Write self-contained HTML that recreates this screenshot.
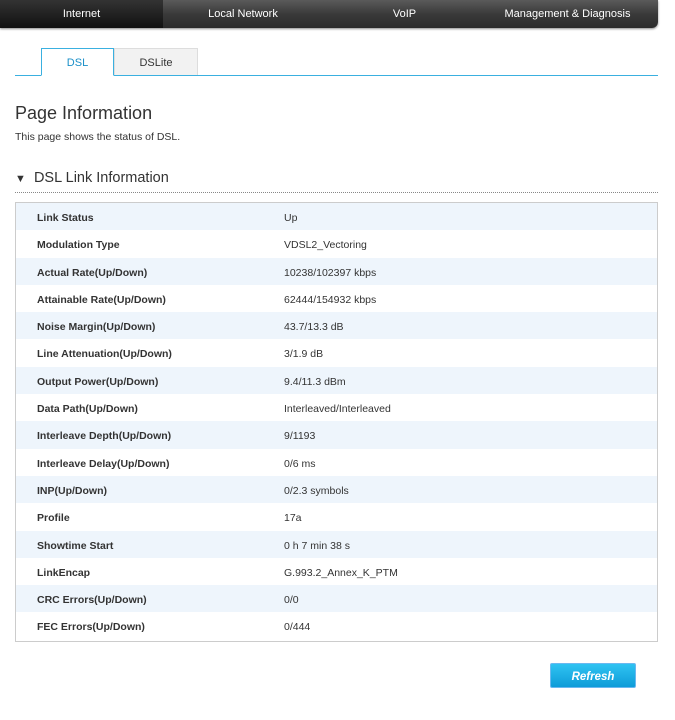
<!DOCTYPE html>
<html><head><style>
body{margin:0;width:675px;height:720px;background:#fff;font-family:"Liberation Sans",sans-serif;position:relative;overflow:hidden}
.nav{position:absolute;left:0;top:0;width:658px;height:28px;background:linear-gradient(#5a5a5a,#3a3a3a 50%,#2a2a2a);border-radius:0 0 6px 0;box-shadow:0 1px 2px #888}
.nav div{position:absolute;top:0;height:28px;line-height:29px;color:#fff;font-size:11px;text-align:center}
.tab{position:absolute;top:48px;height:27px;line-height:28px;font-size:11px;text-align:center;color:#333;box-sizing:border-box}
h1{position:absolute;left:15px;top:103px;margin:0;font-size:18px;font-weight:normal;color:#333}
.desc{position:absolute;left:15px;top:131px;font-size:10.5px;color:#333}
h2{position:absolute;left:15px;top:170px;margin:0;font-size:14.5px;font-weight:normal;color:#333}
.dots{position:absolute;left:15px;top:192px;width:643px;border-top:1px dotted #888}
.tbl{position:absolute;left:15px;top:202px;width:641px;height:438px;border:1px solid #ccc}
.r{height:27.3px;line-height:30px;font-size:10.5px;color:#333;position:relative}
.r:nth-child(odd){background:#eef5fc}
.r b{position:absolute;left:21px}
.r span{position:absolute;left:268px}
.btn{position:absolute;left:550px;top:663px;width:86px;height:25px;background:linear-gradient(#2fc3f2,#0e9cd8);border:1px solid #6ab8f0;box-sizing:border-box;color:#fff;font-weight:bold;font-style:italic;font-size:11.5px;text-align:center;line-height:26px;border-radius:2px}
</style></head><body>
<div class="nav">
<div style="left:0;width:163px;background:linear-gradient(#333,#111);">Internet</div>
<div style="left:163px;width:160px">Local Network</div>
<div style="left:323px;width:163px">VoIP</div>
<div style="left:486px;width:163px">Management &amp; Diagnosis</div>
</div>
<div style="position:absolute;left:15px;top:75px;width:643px;border-top:1px solid #3ab0e0"></div>
<div class="tab" style="left:41px;width:73px;border:1px solid #3ab0e0;border-bottom:1px solid #fff;background:#fff;color:#1a8fc8;height:28px">DSL</div>
<div class="tab" style="left:114px;width:84px;border:1px solid #ddd;border-bottom:none;background:#f2f2f2">DSLite</div>
<h1>Page Information</h1>
<div class="desc">This page shows the status of DSL.</div>
<h2><span style="font-size:11px">▼</span>&nbsp; DSL Link Information</h2>
<div class="dots"></div>
<div class="tbl">
<div class="r"><b>Link Status</b><span>Up</span></div>
<div class="r"><b>Modulation Type</b><span>VDSL2_Vectoring</span></div>
<div class="r"><b>Actual Rate(Up/Down)</b><span>10238/102397 kbps</span></div>
<div class="r"><b>Attainable Rate(Up/Down)</b><span>62444/154932 kbps</span></div>
<div class="r"><b>Noise Margin(Up/Down)</b><span>43.7/13.3 dB</span></div>
<div class="r"><b>Line Attenuation(Up/Down)</b><span>3/1.9 dB</span></div>
<div class="r"><b>Output Power(Up/Down)</b><span>9.4/11.3 dBm</span></div>
<div class="r"><b>Data Path(Up/Down)</b><span>Interleaved/Interleaved</span></div>
<div class="r"><b>Interleave Depth(Up/Down)</b><span>9/1193</span></div>
<div class="r"><b>Interleave Delay(Up/Down)</b><span>0/6 ms</span></div>
<div class="r"><b>INP(Up/Down)</b><span>0/2.3 symbols</span></div>
<div class="r"><b>Profile</b><span>17a</span></div>
<div class="r"><b>Showtime Start</b><span>0 h 7 min 38 s</span></div>
<div class="r"><b>LinkEncap</b><span>G.993.2_Annex_K_PTM</span></div>
<div class="r"><b>CRC Errors(Up/Down)</b><span>0/0</span></div>
<div class="r"><b>FEC Errors(Up/Down)</b><span>0/444</span></div>
</div>
<div class="btn">Refresh</div>
</body></html>
